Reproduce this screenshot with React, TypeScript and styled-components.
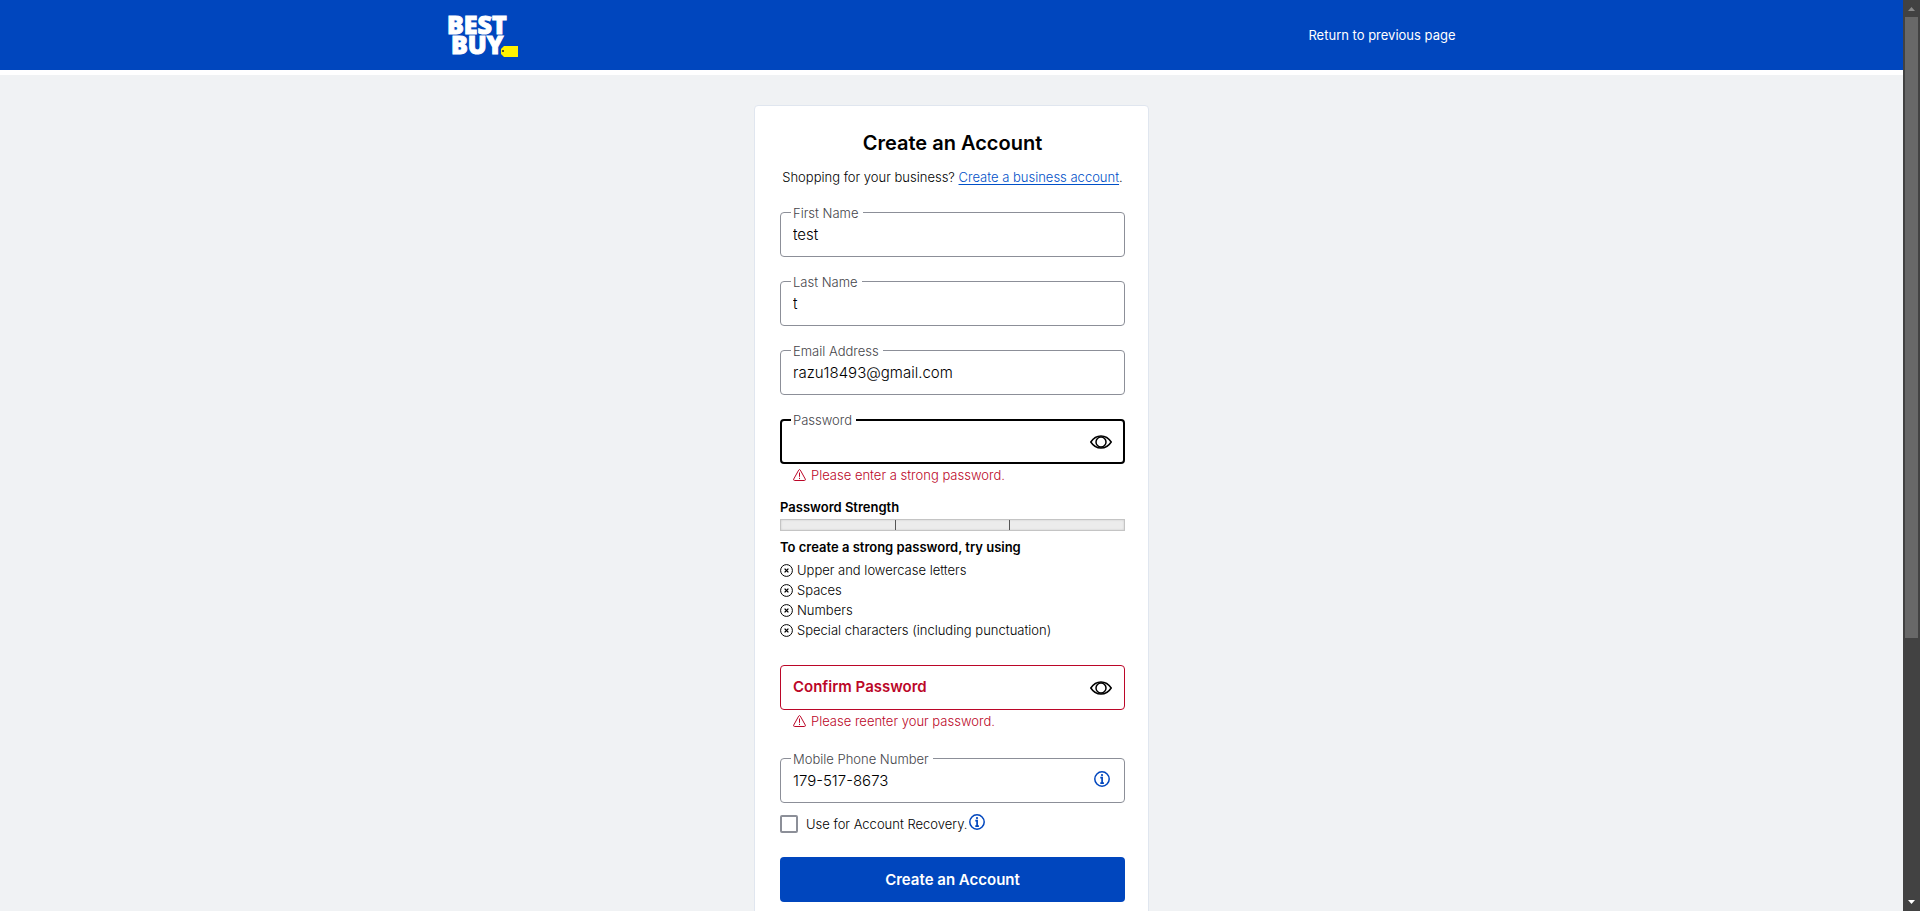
import React from "react";
import styled, { createGlobalStyle } from "styled-components";

const blue = "#0046be";
const red = "#bb0628";
const grey = "#8c8f98";
const ink = "#000";

const GlobalStyle = createGlobalStyle`
  * { box-sizing: border-box; }
  body {
    margin: 0;
    font-family: Inter, "Liberation Sans", sans-serif;
    font-size: 13px;
    font-weight: 300;
    line-height: 20px;
    color: ${ink};
  }
  input, button { font: inherit; color: inherit; }
`;

const Screen = styled.div`
  display: flex;
  height: 100vh;
  overflow: hidden;
`;

const Page = styled.div`
  flex: 1;
  min-width: 0;
  display: flex;
  flex-direction: column;
`;

const Header = styled.header`
  flex: none;
  background: ${blue};
  border-bottom: 5px solid #fff;
`;

const HeaderInner = styled.div`
  display: flex;
  align-items: center;
  justify-content: space-between;
  height: 70px;
  max-width: 1008px;
  margin: 0 auto;
`;

const LogoLink = styled.a`
  display: block;
  height: 44px;
`;

const LogoSvg = styled.svg`
  display: block;
  overflow: visible;
`;

const ReturnLink = styled.a`
  color: #fff;
  font-weight: 400;
  text-decoration: none;
`;

const Main = styled.main`
  flex: 1;
  min-height: 0;
  overflow: hidden;
  padding-top: 30px;
  background: #f0f2f4;
`;

const Card = styled.form`
  width: 100%;
  max-width: 395px;
  margin: 0 auto;
  padding: 25px 23px 48px 25px;
  background: #fff;
  border: 1px solid #e0e6ef;
  border-radius: 4px;
`;

const Title = styled.h1`
  margin: 0 0 12px;
  font-size: 20px;
  line-height: 24px;
  font-weight: 600;
  text-align: center;
`;

const Intro = styled.p`
  margin: 0 0 25px;
  text-align: center;
  white-space: nowrap;
  a { color: #0050c8; text-underline-offset: 2px; }
`;

type Tone = "normal" | "focused" | "error";

const FieldBox = styled.div<{ $gap?: number }>`
  position: relative;
  margin-bottom: ${(p) => p.$gap ?? 24}px;
`;

const TextInput = styled.input<{ $tone: Tone }>`
  display: block;
  width: 100%;
  height: 45px;
  padding: ${(p) => (p.$tone === "focused" ? "0 47px 0 11px" : "0 48px 0 12px")};
  border: ${(p) =>
    p.$tone === "focused" ? `2px solid #000` : `1px solid ${p.$tone === "error" ? red : grey}`};
  border-radius: 4px;
  background: #fff;
  font-size: 15px;
  outline: none;
`;

const FloatLabel = styled.label`
  position: absolute;
  top: -7px;
  left: 11px;
  padding: 0 4px 0 2px;
  background: #fff;
  color: #45454a;
  line-height: 16px;
`;

const InnerLabel = styled.label`
  position: absolute;
  top: 12px;
  left: 13px;
  color: ${red};
  font-size: 15px;
  font-weight: 600;
`;

const IconButton = styled.button`
  display: flex;
  align-self: flex-start;
  padding: 0;
  border: 0;
  background: none;
  color: ${blue};
  cursor: pointer;
`;

const FieldButton = styled(IconButton)<{ $kind: "eye" | "info" }>`
  position: absolute;
  top: 0;
  right: ${(p) => (p.$kind === "eye" ? 13 : 15)}px;
  height: ${(p) => (p.$kind === "eye" ? 45 : 42)}px;
  align-items: center;
  color: ${(p) => (p.$kind === "eye" ? "#000" : blue)};
`;

const ErrorText = styled.p<{ $gap: number }>`
  display: flex;
  align-items: center;
  gap: 5px;
  margin: 1px 0 ${(p) => p.$gap}px;
  padding-left: 13px;
  color: ${red};
`;

const SmallHeading = styled.h2`
  margin: 0;
  font-size: 13px;
  line-height: 20px;
  font-weight: 600;
`;

const StrengthBar = styled.div`
  display: flex;
  height: 12px;
  margin: 2px 0 6px;
  border: 1px solid #c4c4c4;
  background: #ececec;
  box-shadow: inset 0 0 2px #c4c4c4;
`;

const StrengthStep = styled.span`
  flex: 1;
  & + & { border-left: 1px solid #555; }
`;

const Rules = styled.ul`
  margin: 3px 0 25px;
  padding: 0;
  list-style: none;
`;

const Rule = styled.li`
  display: flex;
  align-items: center;
  gap: 4px;
`;

const RecoveryRow = styled.div`
  display: flex;
  align-items: center;
  height: 20px;
  margin: 11px 0 23px;
`;

const Checkbox = styled.input`
  appearance: none;
  width: 18px;
  height: 18px;
  margin: 0 8px 0 0;
  border: 2px solid ${grey};
  border-radius: 2px;
  background: #fff;
`;

const RecoveryLabel = styled.label`
  margin-right: 2px;
`;

const Submit = styled.button`
  display: block;
  width: 100%;
  height: 45px;
  border: 0;
  border-radius: 4px;
  background: ${blue};
  color: #fff;
  font-size: 15px;
  font-weight: 600;
`;

const ScrollRail = styled.div`
  flex: none;
  display: flex;
  flex-direction: column;
  align-items: center;
  width: 17px;
  background: #424242;
`;

const RailArrow = styled.svg`
  flex: none;
  display: block;
  width: 17px;
  height: 17px;
`;

const RailTrack = styled.div`
  flex: 1;
  width: 13px;
`;

const RailThumb = styled.div`
  height: 70.8%;
  background: #686868;
`;

const Logo = () => (
  <LogoSvg width="72" height="44" viewBox="0 0 72 44" role="img" aria-label="Best Buy">
    <g fill="#fff" stroke="#fff" strokeWidth="1" fontFamily="'Open Sans', sans-serif" fontWeight="800" fontSize="25">
      <text x="-1" y="21">BEST</text>
      <text x="3" y="41">BUY</text>
    </g>
    <path d="M56 33H70V44H56L53 41V36Z" fill="#fff200" />
    <circle cx="55" cy="38" r="1" fill="#222" />
  </LogoSvg>
);

const Eye = () => (
  <svg width="22" height="14" viewBox="0 0 22 14" fill="none" stroke="currentColor" strokeWidth="1.5" aria-hidden="true">
    <path d="M.8 7C3.5 2.800 7 .9 11 .9S18.500 2.800 21.200 7C18.500 11.200 15 13.100 11 13.100S3.500 11.200.8 7Z" />
    <circle cx="11" cy="7" r="5" />
  </svg>
);

const Info = () => (
  <svg width="16" height="16" viewBox="0 0 16 16" fill="none" stroke="currentColor" aria-hidden="true">
    <circle cx="8" cy="8" r="7.200" strokeWidth="1.5" />
    <path d="M6.300 6.700H8.100V12M6.300 12.200H9.900" strokeWidth="1.7" />
    <circle cx="8" cy="4.100" r="1.100" fill="currentColor" stroke="none" />
  </svg>
);

const Warning = () => (
  <svg width="13" height="12" viewBox="0 0 13 12" fill="none" stroke="currentColor" aria-hidden="true">
    <path d="M5.700 1.100Q6.500 0 7.300 1.100L12.300 10.100Q12.700 11.400 11.500 11.500H1.500Q.3 11.400.7 10.100Z" />
    <path d="M6.500 3.500V7.800M6.500 8.800V10" />
  </svg>
);

const CircleX = () => (
  <svg width="13" height="13" viewBox="0 0 13 13" fill="none" stroke="currentColor" aria-hidden="true">
    <circle cx="6.500" cy="6.500" r="5.900" />
    <path d="M4.600 4.600L8.400 8.400M8.400 4.600L4.600 8.400" strokeWidth="1.3" />
  </svg>
);

const rules = [
  "Upper and lowercase letters",
  "Spaces",
  "Numbers",
  "Special characters (including punctuation)",
];

interface FieldProps {
  id: string;
  label: string;
  value?: string;
  type?: string;
  tone?: Tone;
  gap?: number;
  inside?: boolean;
  children?: React.ReactNode;
}

const Field = ({ id, label, value, type = "text", tone = "normal", gap, inside, children }: FieldProps) => {
  const Label = inside ? InnerLabel : FloatLabel;
  return (
    <FieldBox $gap={gap}>
      <TextInput id={id} type={type} defaultValue={value} $tone={tone} />
      <Label htmlFor={id}>{label}</Label>
      {children}
    </FieldBox>
  );
};

export default function App() {
  return (
    <>
      <GlobalStyle />
      <Screen>
        <Page>
          <Header>
            <HeaderInner>
              <LogoLink href="#"><Logo /></LogoLink>
              <ReturnLink href="#">Return to previous page</ReturnLink>
            </HeaderInner>
          </Header>
          <Main>
            <Card>
              <Title>Create an Account</Title>
              <Intro>
                Shopping for your business? <a href="#">Create a business account</a>.
              </Intro>
              <Field id="first" label="First Name" value="test" />
              <Field id="last" label="Last Name" value="t" />
              <Field id="email" label="Email Address" value="razu18493@gmail.com" />
              <Field id="password" label="Password" type="password" tone="focused" gap={0}>
                <FieldButton type="button" $kind="eye" aria-label="Show password"><Eye /></FieldButton>
              </Field>
              <ErrorText $gap={12}><Warning />Please enter a strong password.</ErrorText>
              <SmallHeading>Password Strength</SmallHeading>
              <StrengthBar role="meter" aria-label="Password Strength" aria-valuemin={0} aria-valuemax={3} aria-valuenow={0}>
                <StrengthStep /><StrengthStep /><StrengthStep />
              </StrengthBar>
              <SmallHeading>To create a strong password, try using</SmallHeading>
              <Rules>
                {rules.map((r) => <Rule key={r}><CircleX />{r}</Rule>)}
              </Rules>
              <Field id="confirm" label="Confirm Password" type="password" tone="error" gap={0} inside>
                <FieldButton type="button" $kind="eye" aria-label="Show confirmed password"><Eye /></FieldButton>
              </Field>
              <ErrorText $gap={27}><Warning />Please reenter your password.</ErrorText>
              <Field id="phone" label="Mobile Phone Number" type="tel" value="179-517-8673" gap={0}>
                <FieldButton type="button" $kind="info" aria-label="About phone number"><Info /></FieldButton>
              </Field>
              <RecoveryRow>
                <Checkbox type="checkbox" id="recovery" />
                <RecoveryLabel htmlFor="recovery">Use for Account Recovery.</RecoveryLabel>
                <IconButton type="button" aria-label="About account recovery"><Info /></IconButton>
              </RecoveryRow>
              <Submit type="submit">Create an Account</Submit>
            </Card>
          </Main>
        </Page>
        <ScrollRail aria-hidden="true">
          <RailArrow viewBox="0 0 17 17"><path d="M5 11L8.500 7L12 11Z" fill="#8a8a8a" /></RailArrow>
          <RailTrack><RailThumb /></RailTrack>
          <RailArrow viewBox="0 0 17 17"><path d="M5 6L8.500 10L12 6Z" fill="#fff" /></RailArrow>
        </ScrollRail>
      </Screen>
    </>
  );
}
